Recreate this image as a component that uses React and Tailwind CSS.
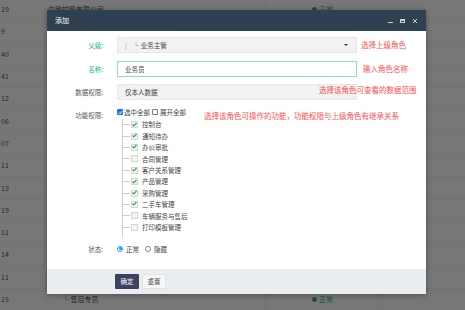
import React from "react";

const treeItems = [
  { name: "控制台", checked: true },
  { name: "通知待办", checked: true },
  { name: "办公审批", checked: true },
  { name: "合同管理", checked: false },
  { name: "客户关系管理", checked: true },
  { name: "产品管理", checked: true },
  { name: "采购管理", checked: true },
  { name: "二手车管理", checked: true },
  { name: "车辆服务与售后", checked: false },
  { name: "打印模板管理", checked: false },
];

const bgRows = [
  { id: "19", name: "由致控股有限公司", status: true },
  { id: "9", name: "", status: false },
  { id: "40", name: "", status: false },
  { id: "41", name: "", status: false },
  { id: "12", name: "", status: false },
  { id: "06", name: "", status: false },
  { id: "07", name: "", status: false },
  { id: "11", name: "", status: false },
  { id: "13", name: "", status: false },
  { id: "19", name: "", status: false },
  { id: "11", name: "", status: false },
  { id: "14", name: "", status: false },
  { id: "11", name: "", status: false },
  { id: "15", name: "└ 售后专员", status: true, sub: true },
];

const TreeCheck = ({ checked }) => (
  <span className="w-[7px] h-[7px] border border-[#d6d6d6] bg-[#f3f3f3] flex items-center justify-center">
    {checked && (
      <svg width="8" height="7" viewBox="0 0 8 7" className="-mt-[1px]">
        <path d="M0.8 3.2 L3 5.6 L7.2 0.8" stroke="#2fa84f" strokeWidth="2" fill="none" />
      </svg>
    )}
  </span>
);

const Label = ({ children, green }) => (
  <div className={`w-[57px] text-right pr-[1px] ${green ? "text-[#1ab394]" : "text-[#555]"}`}>
    {children}
  </div>
);

export default function App() {
  return (
    <div
      className="relative w-[465px] h-[310px] overflow-hidden bg-[#777777] text-[6.5px] leading-none"
      style={{ fontFamily: '"Noto Sans CJK SC", "Noto Sans", sans-serif' }}
    >
      {/* dimmed table behind */}
      <div className="-mt-[1px]">
        {bgRows.map((r, i) => (
          <div key={i} className="flex items-center h-[22.3px] border-b border-[#727272] text-[#262626] text-[7px]">
            <div className="w-[16px] pl-[1px] text-[#2a2a2a]">{r.id}</div>
            <div className={`w-[249px] ${r.sub ? "pl-[46px]" : "pl-[32px]"}`}>{r.name}</div>
            <div className="w-[114px] h-full border-l border-r border-[#727272] flex items-center pl-[46px]">
              {r.status && (
                <span className="flex items-center gap-[2px] text-[#17553a]">
                  <span className="w-[5px] h-[5px] rounded-full bg-[#17553a]" />
                  正常
                </span>
              )}
            </div>
          </div>
        ))}
      </div>

      {/* modal */}
      <div className="absolute left-[47px] top-[10px] w-[379px] bg-white shadow-[0_1px_6px_rgba(0,0,0,0.35)]">
        <div className="h-[21px] bg-[#2f4050] flex items-center px-[8px] text-white text-[7px]">
          <span>添加</span>
          <div className="ml-auto flex items-center gap-[7px] text-[#c8d0d8]">
            <span className="w-[5px] h-[1px] bg-[#c8d0d8] mt-[3px]" />
            <span className="w-[5px] h-[4px] border border-[#c8d0d8] border-t-2" />
            <svg width="6" height="6" viewBox="0 0 6 6">
              <path d="M1 1 L5 5 M5 1 L1 5" stroke="#c8d0d8" strokeWidth="1" />
            </svg>
          </div>
        </div>

        <div className="h-[238px] pt-[6px] text-[#555]">
          <div className="flex items-center h-[16px] mb-[8px]">
            <Label green>父级:</Label>
            <div className="ml-[13px] w-[240px] h-full bg-[#f2f2f2] border border-[#e6e6e6] flex items-center pl-[7px] pr-[8px] text-[#444]">
              <span className="text-[#999] mr-[6px]">|</span>
              <span>└ 业务主管</span>
              <span className="ml-auto w-0 h-0 border-l-[2px] border-r-[2px] border-t-[2px] border-l-transparent border-r-transparent border-t-[#333]" />
            </div>
            <div className="ml-[4px] text-[#ff4d4f] text-[7.5px]">选择上级角色</div>
          </div>

          <div className="flex items-center h-[16px] mb-[7px]">
            <Label green>名称:</Label>
            <div className="ml-[13px] w-[240px] h-full bg-white border border-[#8fdccb] flex items-center pl-[7px] text-[#444]">
              业务员
            </div>
            <div className="ml-[6px] text-[#ff4d4f] text-[7.5px]">输入角色名称</div>
          </div>

          <div className="flex items-center h-[16px]">
            <Label>数据权限:</Label>
            <div className="ml-[13px] w-[240px] h-full bg-[#f2f2f2] border border-[#e9e9e9] flex items-center pl-[7px] text-[#444]">
              仅本人数据
            </div>
            <div className="-ml-[38px] relative text-[#ff4d4f] text-[7.5px] -mt-[4px]">选择该角色可查看的数据范围</div>
          </div>

          <div className="flex items-start mt-[7px]">
            <div className="pt-[5px]">
              <Label>功能权限:</Label>
            </div>
            <div className="ml-[13px] text-[#444]">
              <div className="flex items-start h-[12px] pt-[2px]">
                <span className="w-[6px] h-[6px] rounded-[1px] bg-[#1677ff] flex items-center justify-center">
                  <svg width="5" height="5" viewBox="0 0 5 5">
                    <path d="M0.8 2.6 L2 3.8 L4.3 1" stroke="white" strokeWidth="1" fill="none" />
                  </svg>
                </span>
                <span className="ml-[1px]">选中全部</span>
                <span className="ml-[2px] w-[6px] h-[6px] border border-[#777] rounded-[1px]" />
                <span className="ml-[2px]">展开全部</span>
                <span className="ml-[18px] mt-[3px] text-[#ff4d4f] text-[7.5px]">
                  选择该角色可操作的功能，功能权限与上级角色有继承关系
                </span>
              </div>
              <div className="relative ml-[5px] border-l border-[#cfcfcf] pb-[4px]">
                {treeItems.map((it) => (
                  <div key={it.name} className="flex items-center h-[11.4px]">
                    <span className="w-[7px] h-[1px] bg-[#cfcfcf]" />
                    <span className="ml-[1px]">
                      <TreeCheck checked={it.checked} />
                    </span>
                    <span className="ml-[4px]">{it.name}</span>
                  </div>
                ))}
              </div>
            </div>
          </div>

          <div className="flex items-center h-[12px] mt-[6px]">
            <Label>状态:</Label>
            <div className="ml-[13px] flex items-center text-[#444]">
              <span className="w-[6px] h-[6px] rounded-full border border-[#1e9fff] flex items-center justify-center">
                <span className="w-[3px] h-[3px] rounded-full bg-[#1e9fff]" />
              </span>
              <span className="ml-[3px]">正常</span>
              <span className="ml-[6px] w-[6px] h-[6px] rounded-full border border-[#888]" />
              <span className="ml-[3px]">隐藏</span>
            </div>
          </div>
        </div>

        <div className="h-[25px] bg-[#ebeef0] flex items-center pl-[68px] gap-[3px]">
          <div className="w-[24px] h-[15px] rounded-[1px] bg-[#3b4264] text-white flex items-center justify-center">确定</div>
          <div className="w-[24px] h-[15px] rounded-[1px] bg-[#f7f7f7] border border-[#e3e3e3] text-[#444] flex items-center justify-center">重置</div>
        </div>
      </div>
    </div>
  );
}
